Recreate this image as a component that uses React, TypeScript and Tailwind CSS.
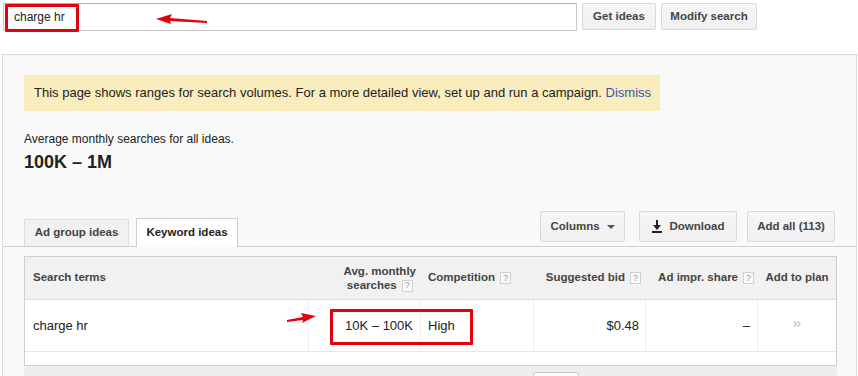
import React from "react";

const Help = () => (
  <span className="inline-flex items-center justify-center w-[11px] h-[12px] border border-[#d0d0d0] bg-[#fafafa] text-[9px] font-normal text-[#999] leading-none ml-[5px] align-middle">
    ?
  </span>
);

const Btn = ({ children, w }: { children: React.ReactNode; w: string }) => (
  <div
    className={`${w} h-[27px] flex items-center justify-center rounded-[2px] border border-[#d9d9d9] bg-gradient-to-b from-[#f6f6f6] to-[#f0f0f0] text-[11.5px] font-bold text-[#444]`}
  >
    {children}
  </div>
);

export default function App() {
  return (
    <div className="relative w-[858px] h-[376px] overflow-hidden bg-white text-[#222] font-['Liberation_Sans',Arial,sans-serif]">
      {/* top search bar */}
      <div className="flex pt-[3px] pl-[3px] gap-[5px]">
        <div className="w-[574px] h-[28px] border border-[#c8c8c8] border-t-[#b0b0b0] bg-white pl-[10px] flex items-center text-[12px] text-[#222]">
          charge hr
        </div>
        <Btn w="w-[74px]">Get ideas</Btn>
        <Btn w="w-[96px]">Modify search</Btn>
      </div>

      {/* panel */}
      <div className="mt-[23px] ml-[2px] w-[855px] h-[330px] border-l border-t border-r border-[#dcdcdc] bg-[#f9f9f9]">
        <div className="mt-[20px] ml-[21px] w-[636px] h-[36px] bg-[#f9edbe] pl-[10px] flex items-center text-[13px] text-[#222]">
          This page shows ranges for search volumes. For a more detailed view, set up and run a campaign.&nbsp;
          <span className="text-[#3656b0]">Dismiss</span>
        </div>
        <div className="ml-[21px] mt-[21px] text-[12px] leading-[14px] text-[#222]">
          Average monthly searches for all ideas.
        </div>
        <div className="ml-[21px] mt-[6px] text-[18px] leading-[20px] font-bold text-[#222]">
          100K – 1M
        </div>

        {/* tabs row */}
        <div className="mt-[39px] h-[36px] border-b border-[#cfcfcf] flex items-end justify-between pl-[21px] pr-[21px]">
          <div className="flex items-end gap-[7px]">
            <div className="w-[105px] h-[27px] border border-b-0 border-[#dcdcdc] bg-[#f1f1f1] flex items-center justify-center text-[11.5px] font-bold text-[#444]">
              Ad group ideas
            </div>
            <div className="w-[102px] h-[29px] -mb-px border border-b-0 border-[#cfcfcf] bg-white flex items-center justify-center text-[11.5px] font-bold text-[#222]">
              Keyword ideas
            </div>
          </div>
          <div className="flex mb-[4px]">
            <div className="w-[85px] h-[31px] flex items-center justify-center gap-[7px] rounded-[2px] border border-[#d9d9d9] bg-gradient-to-b from-[#f6f6f6] to-[#f0f0f0] text-[11.5px] font-bold text-[#444]">
              Columns
              <span className="w-0 h-0 border-l-[4px] border-r-[4px] border-t-[4px] border-l-transparent border-r-transparent border-t-[#555]" />
            </div>
            <div className="ml-[14px] w-[98px] h-[31px] flex items-center justify-center gap-[8px] rounded-[2px] border border-[#d9d9d9] bg-gradient-to-b from-[#f6f6f6] to-[#f0f0f0] text-[11.5px] font-bold text-[#444]">
              <svg width="10" height="13" viewBox="0 0 10 13">
                <rect x="4" y="0" width="2" height="6" fill="#222" />
                <polygon points="1,5 9,5 5,10" fill="#222" />
                <rect x="0" y="11" width="10" height="2" fill="#222" />
              </svg>
              Download
            </div>
            <div className="ml-[10px] w-[88px] h-[31px] flex items-center justify-center rounded-[2px] border border-[#d9d9d9] bg-gradient-to-b from-[#f6f6f6] to-[#f0f0f0] text-[11.5px] font-bold text-[#444]">
              Add all (113)
            </div>
          </div>
        </div>

        {/* table */}
        <div className="mt-[9px] ml-[21px] w-[813px] border border-[#cfcfcf] bg-white">
          <div className="flex h-[43px] bg-[#f1f1f1] border-b border-[#dedede] text-[11.5px] font-bold text-[#444]">
            <div className="w-[284px] flex items-center pl-[8px]">Search terms</div>
            <div className="w-[112px] flex items-center justify-end pr-[5px]">
              <div className="text-center leading-[14px]">
                Avg. monthly
                <br />
                searches
                <Help />
              </div>
            </div>
            <div className="w-[113px] flex items-center pl-[7px]">
              Competition
              <Help />
            </div>
            <div className="w-[112px] flex items-center justify-end pr-[5px]">
              Suggested bid
              <Help />
            </div>
            <div className="w-[112px] flex items-center justify-end pr-[4px]">
              Ad impr. share
              <Help />
            </div>
            <div className="flex-1 flex items-center justify-center">Add to plan</div>
          </div>
          <div className="flex h-[52px] border-b border-[#e6e6e6] text-[13px] text-[#222]">
            <div className="w-[284px] flex items-center pl-[8px] border-r border-[#efefef]">charge hr</div>
            <div className="w-[112px] flex items-center justify-end pr-[7px] border-r border-[#efefef]">10K – 100K</div>
            <div className="w-[113px] flex items-center pl-[7px] border-r border-[#efefef]">High</div>
            <div className="w-[112px] flex items-center justify-end pr-[6px] border-r border-[#efefef]">$0.48</div>
            <div className="w-[112px] flex items-center justify-end pr-[7px] border-r border-[#efefef]">–</div>
            <div className="flex-1 flex items-center justify-center text-[15px] text-[#bbb] -mt-[4px]">»</div>
          </div>
          <div className="h-[13px]" />
        </div>
        <div className="ml-[21px] w-[813px] h-[20px] bg-[#eeeeee] pt-[6px]">
          <div className="ml-[509px] w-[46px] h-[12px] rounded-t-[3px] border border-[#c8c8c8] bg-white" />
        </div>
      </div>

      {/* annotations */}
      <div className="absolute left-[5px] top-[4px] w-[74px] h-[28px] border-[3px] border-[#e3000f] rounded-[1px]" />
      <svg className="absolute left-[155px] top-[13px]" width="54" height="12" viewBox="0 0 54 12">
        <polygon points="1,6 17,1 15,5 52,8 52,10 15,8 16,11" fill="#e3000f" />
      </svg>
      <div className="absolute left-[330px] top-[309px] w-[143px] h-[36px] border-[3px] border-[#e3000f] rounded-[1px]" />
      <svg className="absolute left-[286px] top-[313px]" width="31" height="11" viewBox="0 0 31 11">
        <polygon points="30,3 15,0 17,4 1,7 1,9 17,7 16,10" fill="#e3000f" />
      </svg>
    </div>
  );
}
